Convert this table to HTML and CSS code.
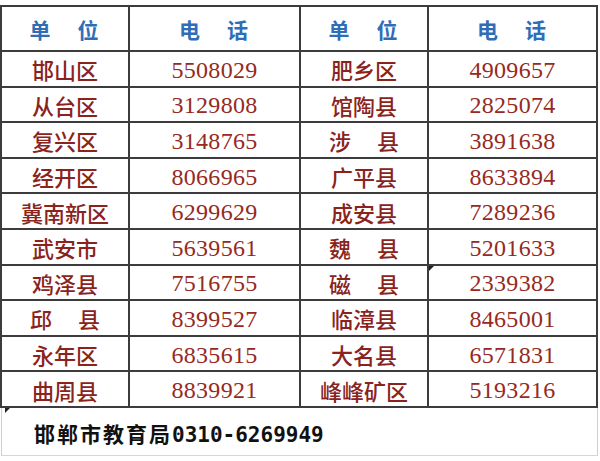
FILE: index.html
```html
<!DOCTYPE html>
<html lang="zh">
<head>
<meta charset="utf-8">
<link rel="stylesheet" href="styles.css">
</head>
<body>
<div class="page">
  <div class="grid">
    <div class="cell head"><span>单</span><span>位</span></div>
    <div class="cell head"><span>电</span><span>话</span></div>
    <div class="cell head"><span>单</span><span>位</span></div>
    <div class="cell head"><span>电</span><span>话</span></div>

    <div class="cell name">邯山区</div><div class="cell num">5508029</div>
    <div class="cell name">肥乡区</div><div class="cell num">4909657</div>

    <div class="cell name">从台区</div><div class="cell num">3129808</div>
    <div class="cell name">馆陶县</div><div class="cell num">2825074</div>

    <div class="cell name">复兴区</div><div class="cell num">3148765</div>
    <div class="cell name spaced"><span>涉</span><span>县</span></div><div class="cell num">3891638</div>

    <div class="cell name">经开区</div><div class="cell num">8066965</div>
    <div class="cell name">广平县</div><div class="cell num">8633894</div>

    <div class="cell name">冀南新区</div><div class="cell num">6299629</div>
    <div class="cell name">成安县</div><div class="cell num">7289236</div>

    <div class="cell name">武安市</div><div class="cell num">5639561</div>
    <div class="cell name spaced"><span>魏</span><span>县</span></div><div class="cell num">5201633</div>

    <div class="cell name">鸡泽县</div><div class="cell num">7516755</div>
    <div class="cell name spaced"><span>磁</span><span>县</span></div><div class="cell num marked">2339382</div>

    <div class="cell name spaced"><span>邱</span><span>县</span></div><div class="cell num">8399527</div>
    <div class="cell name">临漳县</div><div class="cell num">8465001</div>

    <div class="cell name">永年区</div><div class="cell num">6835615</div>
    <div class="cell name">大名县</div><div class="cell num">6571831</div>

    <div class="cell name">曲周县</div><div class="cell num">8839921</div>
    <div class="cell name">峰峰矿区</div><div class="cell num">5193216</div>
  </div>
  <div class="footer">
    <span class="marker"></span>
    <span class="ftext"><span class="fcn">邯郸市教育局</span><span class="fnum">0310-6269949</span></span>
  </div>
</div>
</body>
</html>
```

FILE: styles.css
```css
html, body {
  margin: 0;
  padding: 0;
  background: #ffffff;
}

.page {
  width: 600px;
  height: 461px;
  padding-top: 5px;
  box-sizing: border-box;
  overflow: hidden;
}

.grid {
  display: grid;
  width: 598px;
  grid-template-columns: 126px 169px 126px 167px;
  grid-template-rows: 43px repeat(10, 33.6px);
  gap: 2px;
  padding: 2px;
  box-sizing: border-box;
  background: #3c3c3c;
}

.cell {
  background: #ffffff;
  display: flex;
  align-items: center;
  justify-content: center;
  position: relative;
}

.head {
  font-family: "Noto Sans CJK SC", sans-serif;
  font-weight: 700;
  font-size: 21px;
  color: #2f6db6;
  gap: 27px;
  padding-top: 1px;
  padding-right: 2px;
}

.name {
  font-family: "Noto Sans CJK SC", sans-serif;
  font-size: 22px;
  font-weight: 500;
  color: #8a231c;
  padding-top: 1px;
}

.name.spaced {
  gap: 26px;
}

.num {
  font-family: "Liberation Serif", serif;
  font-size: 24px;
  color: #962a22;
  letter-spacing: 0.3px;
  padding-top: 3px;
}

.marked::before {
  content: "";
  position: absolute;
  left: 0;
  top: 0;
  border-top: 5px solid #222;
  border-right: 5px solid transparent;
}

.footer {
  position: relative;
  height: 48px;
  margin-left: 1px;
  width: 597px;
  box-sizing: border-box;
  border-left: 1px solid #cfcfcf;
  border-right: 1px solid #cfcfcf;
  border-bottom: 1px solid #d6d6d6;
  display: flex;
  align-items: center;
  padding-left: 32px;
  padding-top: 4px;
}

.footer .marker {
  position: absolute;
  left: 3px;
  top: 0;
  border-top: 5px solid #222;
  border-right: 5px solid transparent;
}

.ftext {
  color: #111111;
  font-weight: 700;
}

.fcn {
  font-family: "Noto Sans CJK SC", sans-serif;
  font-size: 21px;
  letter-spacing: 2px;
}

.fnum {
  font-family: "DejaVu Sans Mono", monospace;
  font-size: 21px;
  font-weight: 700;
}
```
